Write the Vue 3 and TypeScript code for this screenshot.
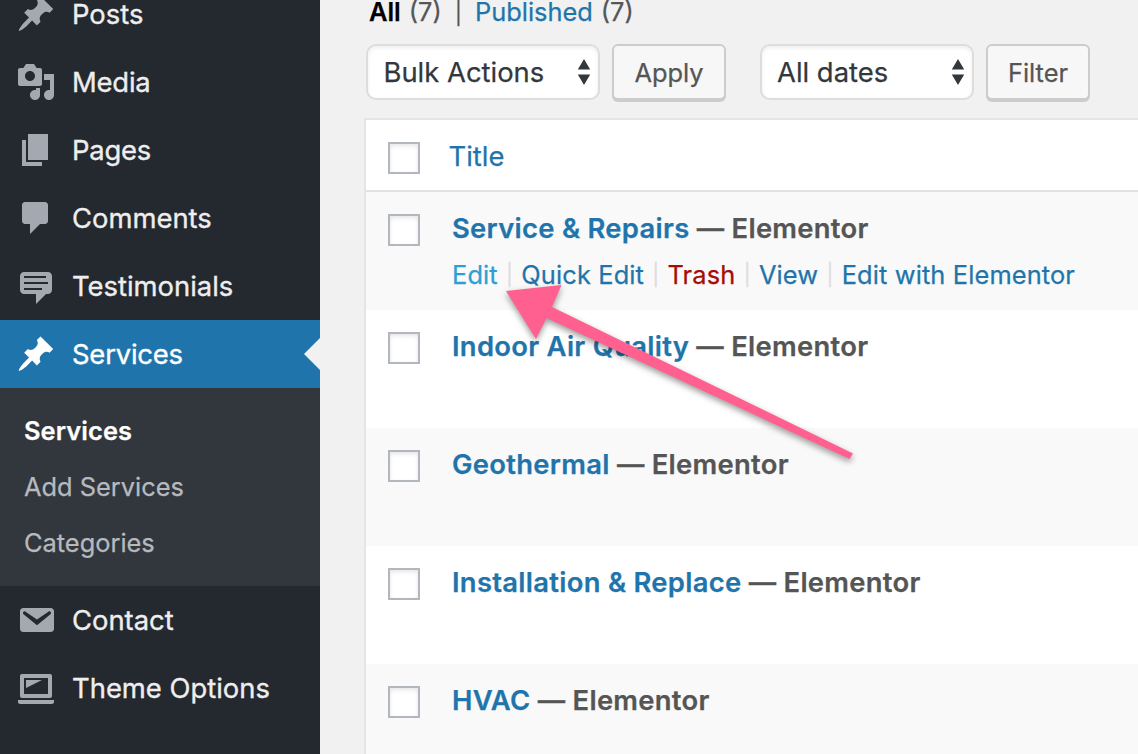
<script setup lang="ts">
interface MenuItem {
  label: string
  icon: string
  tight?: boolean
  current?: boolean
}

const pin =
  'M10.44 3.02l1.82-1.82 6.36 6.35-1.83 1.82c-1.05-.68-2.48-.57-3.41.36l-.75.75c-.92.93-1.04 2.35-.35 3.41l-1.83 1.82-2.41-2.41-2.8 2.79c-.42.42-3.38 2.71-3.8 2.29s1.86-3.39 2.28-3.81l2.79-2.79L4.1 9.36l1.83-1.82c1.05.69 2.48.57 3.4-.36l.75-.75c.93-.92 1.05-2.35.36-3.41z'

const topMenu: MenuItem[] = [
  { label: 'Posts', icon: pin },
  {
    label: 'Media',
    tight: true,
    icon: 'M13 11V4c0-.55-.45-1-1-1h-1.67L9 1H5L3.67 3H2c-.55 0-1 .45-1 1v7c0 .55.45 1 1 1h10c.55 0 1-.45 1-1zM7 4.5c1.38 0 2.5 1.12 2.5 2.5S8.38 9.5 7 9.5 4.5 8.38 4.5 7 5.62 4.5 7 4.5zM14 6h5v10.5c0 1.38-1.12 2.5-2.5 2.5S14 17.88 14 16.5s1.12-2.5 2.5-2.5c.17 0 .34.02.5.05V9h-3V6zm-4 8.05V13h2v3.5c0 1.38-1.12 2.5-2.5 2.5S7 17.88 7 16.5 8.12 14 9.5 14c.17 0 .34.02.5.05z',
  },
  { label: 'Pages', tight: true, icon: 'M6 15V2h10v13H6zm-1 1h8v2H3V5h2v11z' },
  {
    label: 'Comments',
    icon: 'M4.500 2h10c.83 0 1.500.67 1.500 1.500v8c0 .83-.67 1.500-1.500 1.500H12l-5 5v-5H4.500C3.670 13 3 12.330 3 11.500v-8C3 2.670 3.670 2 4.500 2z',
  },
  {
    label: 'Testimonials',
    icon: 'M4 3h12c.55 0 1.02.2 1.41.59S18 4.45 18 5v7c0 .55-.2 1.02-.59 1.41S16.55 14 16 14h-1l-5 5v-5H4c-.55 0-1.02-.2-1.41-.59S2 12.55 2 12V5c0-.55.2-1.02.59-1.41S3.45 3 4 3zm11 2H4v1h11V5zm1 3H4v1h12V8zm-3 3H4v1h9v-1z',
  },
  { label: 'Services', icon: pin, tight: true, current: true },
]

const submenu = ['Services', 'Add Services', 'Categories']

const bottomMenu: MenuItem[] = [
  {
    label: 'Contact',
    icon: 'M3.87 4h13.25C18.37 4 19 4.59 19 5.79v8.42c0 1.19-.63 1.79-1.88 1.79H3.87c-1.25 0-1.88-.6-1.88-1.79V5.79c0-1.2.63-1.79 1.88-1.79zm6.62 8.6l6.74-5.53c.24-.2.43-.66.13-1.07-.29-.41-.82-.42-1.17-.17l-5.7 3.86L4.8 5.83c-.35-.25-.88-.24-1.17.17-.3.41-.11.87.13 1.07z',
  },
  {
    label: 'Theme Options',
    icon: 'M3 3h14c.6 0 1 .4 1 1v10c0 .6-.4 1-1 1H3c-.6 0-1-.4-1-1V4c0-.6.4-1 1-1zm13 2H4v8h12V5zm-3 1H5v4zm6 11v-1H1v1c0 .6.5 1 1.1 1h15.8c.6 0 1.1-.4 1.1-1z',
  },
]

const rows = ['Service & Repairs', 'Indoor Air Quality', 'Geothermal', 'Installation & Replace', 'HVAC']

const actions = [
  { label: 'Edit', kind: 'hover' },
  { label: 'Quick Edit', kind: '' },
  { label: 'Trash', kind: 'trash' },
  { label: 'View', kind: '' },
  { label: 'Edit with Elementor', kind: '' },
]
</script>

<template>
  <div class="screen">
    <nav class="sidebar">
      <a v-for="item in topMenu" :key="item.label" class="item" :class="{ current: item.current, tight: item.tight }">
        <svg class="icon" viewBox="0 0 20 20"><path fill-rule="evenodd" :d="item.icon" /></svg>
        <span>{{ item.label }}</span>
      </a>
      <div class="submenu">
        <a v-for="(label, i) in submenu" :key="label" class="subitem" :class="{ active: i === 0 }">{{ label }}</a>
      </div>
      <a v-for="item in bottomMenu" :key="item.label" class="item">
        <svg class="icon" viewBox="0 0 20 20"><path fill-rule="evenodd" :d="item.icon" /></svg>
        <span>{{ item.label }}</span>
      </a>
    </nav>

    <main class="content">
      <div class="views">
        <b>All</b><span class="count">(7)</span><span class="bar">|</span><a class="link">Published</a><span class="count">(7)</span>
      </div>

      <div class="toolbar">
        <div class="select bulk">
          <span>Bulk Actions</span>
          <svg class="arrows" viewBox="0 0 14 26"><path d="M7 0l6.200 10.500H.8zM7 26l6.200-10.500H.8z" /></svg>
        </div>
        <button class="button apply">Apply</button>
        <div class="select dates">
          <span>All dates</span>
          <svg class="arrows" viewBox="0 0 14 26"><path d="M7 0l6.200 10.500H.8zM7 26l6.200-10.500H.8z" /></svg>
        </div>
        <button class="button filter">Filter</button>
      </div>

      <div class="table">
        <div class="head">
          <span class="check"></span>
          <a class="link heading">Title</a>
        </div>
        <div v-for="(title, i) in rows" :key="title" class="row">
          <span class="check"></span>
          <div class="cell">
            <div class="title"><a class="link">{{ title }}</a> — Elementor</div>
            <div v-if="i === 0" class="actions">
              <template v-for="(action, n) in actions" :key="action.label">
                <span v-if="n > 0" class="sep">|</span>
                <a class="link" :class="action.kind">{{ action.label }}</a>
              </template>
            </div>
          </div>
        </div>
      </div>
    </main>

    <svg class="pointer" viewBox="0 0 370 200">
      <path d="M10 11L65.500 5L56 27L357 173.500L353.500 179L50.500 38L40 59z" />
    </svg>
  </div>
</template>

<style>
body {
  margin: 0;
  overflow: hidden;
}
</style>

<style scoped>
.screen {
  position: relative;
  display: flex;
  width: 1138px;
  height: 754px;
  overflow: hidden;
  background: #f1f1f1;
  color: #555;
  font-family: Inter, 'Liberation Sans', sans-serif;
  -webkit-text-stroke: 0.25px currentColor;
}
.sidebar {
  width: 320px;
  flex: none;
  margin-top: -20px;
  background: #24282f;
}
.item {
  position: relative;
  display: flex;
  align-items: center;
  gap: 16px;
  height: 68px;
  padding-left: 16px;
  box-sizing: border-box;
  color: #eee;
  font-size: 27.4px;
  -webkit-text-stroke: 0.35px currentColor;
}
.tight {
  letter-spacing: -0.2px;
}
.icon {
  width: 40px;
  height: 40px;
  fill: #a4a9b1;
}
.current {
  background: #1f75ab;
  color: #fff;
}
.current .icon {
  fill: #fff;
}
.current::after {
  content: '';
  position: absolute;
  right: 0;
  top: 18px;
  border: 16px solid transparent;
  border-left: 0;
  border-right-color: #f1f1f1;
}
.submenu {
  padding: 15px 0;
  background: #32363d;
}
.subitem {
  display: block;
  height: 56px;
  padding-left: 24px;
  color: #b6babf;
  font-size: 25.4px;
  line-height: 56px;
}
.active {
  color: #fff;
  font-weight: 600;
  letter-spacing: 0.1px;
}
.content {
  flex: 1;
  min-width: 0;
  padding-left: 44px;
}
.link {
  color: #1f75ab;
}
.views {
  display: flex;
  height: 44px;
  padding-left: 5px;
  font-size: 25.4px;
  line-height: 23px;
}
.views b {
  color: #000;
  font-weight: 600;
}
.count {
  margin-left: 8px;
}
.bar {
  margin: 0 13px;
  font-size: 22px;
  line-height: 26px;
}
.toolbar {
  display: flex;
  align-items: flex-start;
  height: 74px;
  padding-left: 2px;
}
.select {
  display: flex;
  align-items: center;
  justify-content: space-between;
  height: 56px;
  padding: 0 7.5px 0 15.5px;
  box-sizing: border-box;
  border: 2px solid #ddd;
  border-radius: 10px;
  background: #fff;
  box-shadow: inset 0 2px 4px rgba(0, 0, 0, 0.07);
  color: #32373c;
  font-size: 27.4px;
}
.bulk {
  width: 234px;
}
.dates {
  width: 214px;
  margin-left: 34px;
  padding-left: 15px;
}
.arrows {
  width: 14px;
  height: 26px;
  fill: #32373c;
}
.button {
  height: 56px;
  margin: 0 0 0 12px;
  padding: 0;
  border: 2px solid #ccc;
  border-radius: 6px;
  background: #f7f7f7;
  box-shadow: 0 2px 0 #ccc;
  color: #555;
  font-family: inherit;
  font-size: 25.4px;
}
.apply {
  width: 114px;
}
.filter {
  width: 104px;
}
.table {
  border: 2px solid #e5e5e5;
  border-right: 0;
  background: #fff;
}
.head {
  display: flex;
  height: 70px;
  border-bottom: 2px solid #e1e1e1;
}
.heading {
  margin-left: 28.5px;
  font-size: 27.4px;
  line-height: 72px;
}
.row {
  display: flex;
  height: 118px;
}
.row:nth-child(even) {
  background: #f9f9f9;
}
.check {
  flex: none;
  width: 32px;
  height: 32px;
  margin: 22px 0 0 22px;
  box-sizing: border-box;
  border: 2px solid #b2b7bd;
  background: #fff;
  box-shadow: inset 0 2px 4px rgba(0, 0, 0, 0.1);
}
.cell {
  margin-left: 32px;
  white-space: nowrap;
}
.title {
  margin-top: 16px;
  font-size: 27.4px;
  font-weight: 600;
  letter-spacing: 0.29px;
  line-height: 40px;
}
.actions {
  display: flex;
  margin-top: 8px;
  font-size: 25.4px;
  letter-spacing: 0.13px;
  line-height: 38px;
}
.sep {
  width: 23.5px;
  color: #ddd;
  font-size: 21px;
  letter-spacing: 0;
  text-align: center;
}
.hover {
  color: #2e9fd4;
}
.trash {
  color: #a60c04;
}
.pointer {
  position: absolute;
  left: 496px;
  top: 280px;
  width: 370px;
  height: 200px;
  fill: #ff6090;
  filter: drop-shadow(0 3px 3px rgba(0, 0, 0, 0.4));
}
</style>
